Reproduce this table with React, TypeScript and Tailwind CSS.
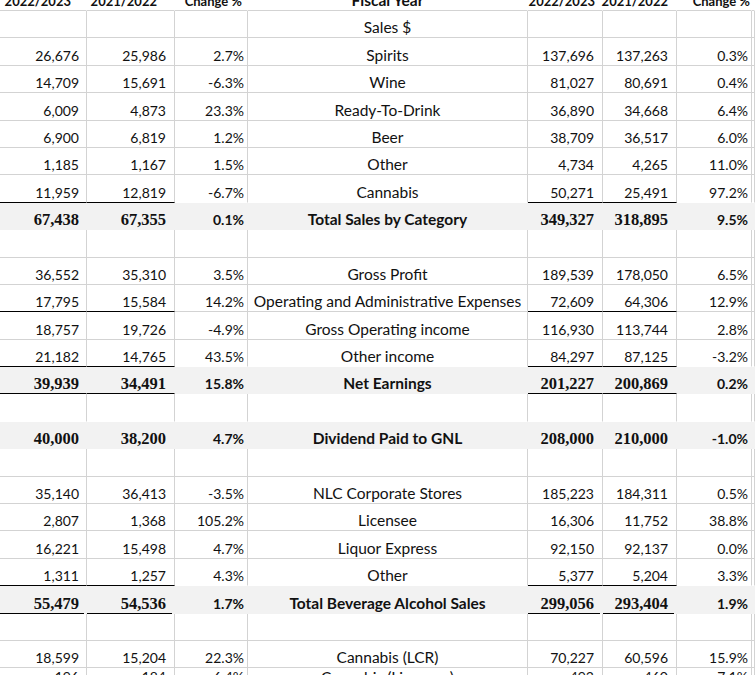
import { clsx as cn } from 'clsx';

type Row = {
  label?: string;
  left?: [string, string, string];
  right?: [string, string, string];
  total?: boolean;
  header?: boolean;
  under?: 'line' | 'split';
  // row below is a grey total row, so hide its bottom gridline
  beforeTotal?: boolean;
  cut?: boolean;
};

const rows: Row[] = [
  { header: true, label: 'Fiscal Year', left: ['2022/2023', '2021/2022', 'Change %'], right: ['2022/2023', '2021/2022', 'Change %'] },
  { label: 'Sales $' },
  { label: 'Spirits', left: ['26,676', '25,986', '2.7%'], right: ['137,696', '137,263', '0.3%'] },
  { label: 'Wine', left: ['14,709', '15,691', '-6.3%'], right: ['81,027', '80,691', '0.4%'] },
  { label: 'Ready-To-Drink', left: ['6,009', '4,873', '23.3%'], right: ['36,890', '34,668', '6.4%'] },
  { label: 'Beer', left: ['6,900', '6,819', '1.2%'], right: ['38,709', '36,517', '6.0%'] },
  { label: 'Other', left: ['1,185', '1,167', '1.5%'], right: ['4,734', '4,265', '11.0%'] },
  { label: 'Cannabis', left: ['11,959', '12,819', '-6.7%'], right: ['50,271', '25,491', '97.2%'], under: 'line', beforeTotal: true },
  { label: 'Total Sales by Category', left: ['67,438', '67,355', '0.1%'], right: ['349,327', '318,895', '9.5%'], total: true },
  {},
  { label: 'Gross Profit', left: ['36,552', '35,310', '3.5%'], right: ['189,539', '178,050', '6.5%'] },
  { label: 'Operating and Administrative Expenses', left: ['17,795', '15,584', '14.2%'], right: ['72,609', '64,306', '12.9%'], under: 'line' },
  { label: 'Gross Operating income', left: ['18,757', '19,726', '-4.9%'], right: ['116,930', '113,744', '2.8%'] },
  { label: 'Other income', left: ['21,182', '14,765', '43.5%'], right: ['84,297', '87,125', '-3.2%'], under: 'line', beforeTotal: true },
  { label: 'Net Earnings', left: ['39,939', '34,491', '15.8%'], right: ['201,227', '200,869', '0.2%'], total: true, under: 'line' },
  { beforeTotal: true },
  { label: 'Dividend Paid to GNL', left: ['40,000', '38,200', '4.7%'], right: ['208,000', '210,000', '-1.0%'], total: true },
  {},
  { label: 'NLC Corporate Stores', left: ['35,140', '36,413', '-3.5%'], right: ['185,223', '184,311', '0.5%'] },
  { label: 'Licensee', left: ['2,807', '1,368', '105.2%'], right: ['16,306', '11,752', '38.8%'] },
  { label: 'Liquor Express', left: ['16,221', '15,498', '4.7%'], right: ['92,150', '92,137', '0.0%'] },
  { label: 'Other', left: ['1,311', '1,257', '4.3%'], right: ['5,377', '5,204', '3.3%'], under: 'line', beforeTotal: true },
  { label: 'Total Beverage Alcohol Sales', left: ['55,479', '54,536', '1.7%'], right: ['299,056', '293,404', '1.9%'], total: true, under: 'split' },
  {},
  { label: 'Cannabis (LCR)', left: ['18,599', '15,204', '22.3%'], right: ['70,227', '60,596', '15.9%'] },
  { label: 'Cannabis (Licensee)', left: ['196', '184', '6.4%'], right: ['493', '460', '7.1%'], cut: true },
];

const sans = "font-[family-name:Lato,'Liberation_Sans',sans-serif]";
const serif = "font-[family-name:'Liberation_Serif',serif]";

type Kind = 'num' | 'pct' | 'label' | 'pad';

function Cell({
  row,
  kind,
  text,
  underlined,
  pad,
}: {
  row: Row;
  kind: Kind;
  text?: string;
  underlined?: boolean;
  pad: string;
}) {
  const bottom = underlined
    ? 'border-b-black'
    : row.total
      ? 'border-b-[#f2f2f2]'
      : row.beforeTotal
        ? 'border-b-white'
        : 'border-b-[#d3d3d3]';
  const side = row.total ? 'border-r-[#f2f2f2]' : row.header ? 'border-r-white' : 'border-r-[#d3d3d3]';
  const split = underlined && row.under === 'split';

  let font = sans + ' text-[14px] pb-[2px]';
  if (row.header && kind !== 'label') font = sans + ' text-[13px] pb-[2px]';
  if (kind === 'label') font = sans + ' text-[15.5px] pb-[1.5px]';
  if (row.total && kind === 'num') font = serif + ' text-[16.5px] pb-[0.5px]';

  return (
    <div
      className={cn(
        'relative flex border-r border-b whitespace-nowrap text-[#111]',
        row.cut ? 'items-start pt-[2px]' : 'items-end',
        row.total ? 'bg-[#f2f2f2]' : 'bg-white',
        split ? 'border-b-transparent' : bottom,
        side,
        kind === 'label' ? 'justify-center' : 'justify-end',
        pad,
        (row.total || row.header) && 'font-bold'
      )}
    >
      {text && <span className={cn('block leading-none', font)}>{text}</span>}
      {split && <div className="absolute left-0 right-[2px] bottom-[-1px] h-px bg-black" />}
    </div>
  );
}

function SheetRow({ row }: { row: Row }) {
  const ul = !!row.under;
  const h = row.header;
  return (
    <>
      <Cell row={row} kind="num" pad={h ? 'pr-[15px]' : 'pr-[7px]'} text={row.left?.[0]} underlined={ul} />
      <Cell row={row} kind="num" pad={h ? 'pr-[17px]' : 'pr-[8px]'} text={row.left?.[1]} underlined={ul} />
      <Cell row={row} kind="pct" pad={h ? 'pr-[5px]' : 'pr-[3px]'} text={row.left?.[2]} />
      <Cell row={row} kind="label" pad="" text={row.label} />
      <Cell row={row} kind="num" pad={h ? 'pr-[7px]' : 'pr-[8px]'} text={row.right?.[0]} underlined={ul} />
      <Cell row={row} kind="num" pad={h ? 'pr-[8px]' : 'pr-[8px]'} text={row.right?.[1]} underlined={ul} />
      <Cell row={row} kind="pct" pad={h ? 'pr-[1px]' : 'pr-[3px]'} text={row.right?.[2]} />
      <Cell row={row} kind="pad" pad="" />
    </>
  );
}

export default function App() {
  return (
    <div className="w-[755px] h-[675px] overflow-hidden bg-white">
      <div className="grid grid-cols-[87px_88px_73px_280px_75px_74px_75px_1fr] auto-rows-[27.4px] mt-[-16.4px]">
        {rows.map((row, i) => (
          <SheetRow key={i} row={row} />
        ))}
      </div>
    </div>
  );
}
